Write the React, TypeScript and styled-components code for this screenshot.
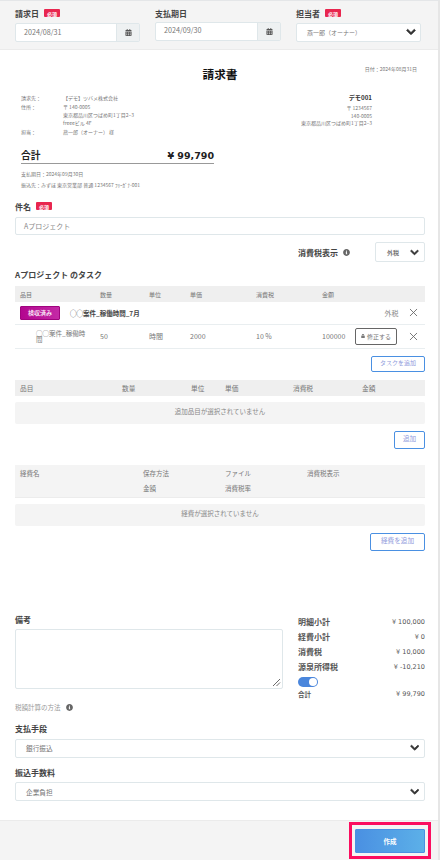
import React from 'react'
import styled, { createGlobalStyle } from 'styled-components'
import { FaCalendarAlt, FaChevronDown, FaInfoCircle, FaLock } from 'react-icons/fa'
import { LuX } from 'react-icons/lu'

const GlobalStyle = createGlobalStyle`
  * { box-sizing: border-box; }
  html, body { margin: 0; background: #fff; }
  body {
    font-family: "Noto Sans CJK JP", "Noto Sans", sans-serif;
    color: #333;
    overflow: hidden;
  }
`

const Page = styled.div`
  width: 440px;
  height: 860px;
  border-right: 2px solid #e6e6e6;
  border-top: 1px solid #e4e6e8;
  display: flex;
  flex-direction: column;
`
const TopBar = styled.div`
  height: 49px;
  background: #f4f4f4;
  border-bottom: 1px solid #ebebeb;
  padding: 5px 17px 0 15px;
  display: grid;
  grid-template-columns: 125px 126px 125px;
  justify-content: space-between;
  flex: none;
`
const FieldLabel = styled.div`
  display: flex;
  align-items: center;
  gap: 5px;
  height: 14px;
  font-size: 8px;
  font-weight: 700;
  color: #444;
`
const Required = styled.span`
  background: #e8264f;
  color: #fff;
  font-size: 5px;
  font-weight: 700;
  width: 16px;
  height: 8px;
  border-radius: 1px;
  display: grid;
  place-items: center;
`
const DateGroup = styled.div<{ $compact?: boolean }>`
  display: flex;
  height: ${(p) => (p.$compact ? 18.5 : 19)}px;
  margin-top: ${(p) => (p.$compact ? 2 : 2.5)}px;
  border: 1px solid #dfe7ea;
  border-radius: 2px;
  background: #fff;
`
const DateText = styled.div<{ $compact?: boolean }>`
  flex: 1;
  font-size: 7.2px;
  line-height: ${(p) => (p.$compact ? 15 : 16)}px;
  padding-left: 8px;
  color: #777;
`
const CalendarAddon = styled.div`
  width: 23px;
  background: #eef1f2;
  border-left: 1px solid #dfe7ea;
  display: grid;
  place-items: center;
  color: #555;
  font-size: 7px;
`
const SelectBox = styled.div`
  display: flex;
  align-items: center;
  justify-content: space-between;
  height: 19px;
  border: 1px solid #dfe7ea;
  border-radius: 2px;
  background: #fff;
  padding: 0 4px 0 10px;
  font-size: 6px;
  color: #777;
  svg { color: #333; font-size: 10px; stroke: #333; stroke-width: 40px; }
`
const TopSelect = styled(SelectBox)`
  margin-top: 2.5px;
`
const Sheet = styled.div`
  flex: none;
  height: 149px;
  padding: 0 21px;
  position: relative;
`
const Title = styled.div`
  text-align: center;
  font-size: 11.7px;
  font-weight: 700;
  color: #111;
  line-height: 18px;
  padding: 15px 0 0 2px;
`
const IssueDate = styled.div`
  position: absolute;
  top: 15px;
  right: 21px;
  font-size: 5px;
  line-height: 7px;
  color: #777;
`
const AddressRow = styled.div`
  display: flex;
  justify-content: space-between;
  margin-top: 11px;
`
const AddressGrid = styled.div`
  display: grid;
  grid-template-columns: 42px auto;
  font-size: 5px;
  line-height: 8px;
  color: #777;
  & > div.gap { margin-top: 1px; }
`
const SenderBlock = styled.div`
  text-align: right;
  font-size: 5px;
  line-height: 7.6px;
  color: #777;
  padding-right: 45px;
  strong { display: block; font-size: 6.2px; color: #333; line-height: 8px; margin-bottom: 2px; }
`
const TotalRow = styled.div`
  display: flex;
  justify-content: space-between;
  align-items: center;
  width: 193px;
  height: 17px;
  margin-top: 11px;
  border-bottom: 1px solid #999;
  font-size: 9.7px;
  font-weight: 700;
  color: #222;
`
const TotalAmount = styled.span`
  font-family: "DejaVu Sans", sans-serif;
  font-size: 9.5px;
`
const SmallNote = styled.div<{ $gap: number }>`
  font-size: 5px;
  color: #777;
  line-height: 7px;
  margin-top: ${(p) => p.$gap}px;
`
const Body = styled.div`
  flex: 1;
  padding: 0 13px 0 15px;
  display: flex;
  flex-direction: column;
`
const SubjectInput = styled.div`
  height: 18.5px;
  margin-top: 3.5px;
  border: 1px solid #dfe7ea;
  border-radius: 2px;
  font-size: 7px;
  line-height: 16px;
  padding-left: 8px;
  color: #888;
`
const TaxRow = styled.div`
  display: flex;
  justify-content: flex-end;
  align-items: center;
  margin-top: 7px;
  height: 20px;
  font-size: 8px;
  font-weight: 700;
  color: #444;
`
const InfoIcon = styled(FaInfoCircle)`
  font-size: 7px;
  color: #666;
  margin-left: 5px;
  flex: none;
`
const TaxSelect = styled(SelectBox)`
  width: 50px;
  height: 20px;
  margin-left: 25px;
  padding: 0 5px 0 11px;
  font-weight: 700;
  font-size: 6px;
  svg { font-size: 9px; }
`
const SectionTitle = styled.div`
  font-size: 8px;
  font-weight: 700;
  color: #444;
  margin-top: 6px;
  line-height: 14px;
`
const HeadRow = styled.div<{ $cols: string; $size: number; $top: number }>`
  display: grid;
  grid-template-columns: ${(p) => p.$cols};
  align-items: center;
  height: 16px;
  margin-top: ${(p) => p.$top}px;
  padding-left: 5px;
  background: #efefef;
  font-size: ${(p) => p.$size}px;
  color: #777;
`
const TaskRow = styled.div`
  display: grid;
  grid-template-columns: 80px 49px 41px 66px 66px 33px 1fr;
  align-items: center;
  height: 24px;
  padding-left: 5px;
  border-bottom: 1px solid #e9eef0;
  font-size: 7px;
  color: #777;
`
const GroupRow = styled.div`
  display: flex;
  align-items: center;
  height: 22.5px;
  padding-left: 5px;
  border-bottom: 1px solid #e9eef0;
  font-size: 6.5px;
  font-weight: 700;
  color: #444;
`
const Badge = styled.span`
  width: 40px;
  height: 14px;
  background: linear-gradient(90deg, #b3068f, #c42aa6);
  border: 1px solid #a0047f;
  border-radius: 1px;
  color: #fff;
  display: grid;
  place-items: center;
  font-size: 6px;
  font-weight: 500;
  margin-right: 10px;
`
const TaxNote = styled.span`
  margin-left: auto;
  font-size: 7px;
  font-weight: 400;
  color: #888;
`
const RemoveIcon = styled(LuX)`
  font-size: 13px;
  stroke-width: 1.6;
  color: #666;
  flex: none;
  margin: 0 5.5px 0 8px;
`
const TaskName = styled.div`
  padding: 0 13px 0 16px;
  font-size: 6.5px;
  line-height: 6.5px;
`
const EditCell = styled.div`
  display: flex;
  align-items: center;
  justify-content: space-between;
`
const EditButton = styled.div`
  width: 42px;
  height: 17px;
  border: 1px solid #666;
  border-radius: 2px;
  display: flex;
  align-items: center;
  justify-content: center;
  gap: 2px;
  font-size: 6px;
  color: #777;
  svg { font-size: 4px; }
`
const ButtonRow = styled.div`
  display: flex;
  justify-content: flex-end;
  margin-top: 7px;
`
const OutlineButton = styled.div<{ $w: number; $h: number; $size: number }>`
  width: ${(p) => p.$w}px;
  height: ${(p) => p.$h}px;
  border: 1px solid #4a90e2;
  border-radius: 2px;
  color: #8f9bdc;
  font-size: ${(p) => p.$size}px;
  text-align: center;
  line-height: 12px;
`
const EmptyNote = styled.div`
  height: 22px;
  margin-top: 6px;
  background: #f4f4f4;
  border-radius: 2px;
  font-size: 6.5px;
  color: #888;
  text-align: center;
  line-height: 18px;
`
const ExpenseHead = styled.div`
  display: grid;
  grid-template-columns: 123px 82px 82px 1fr;
  grid-auto-rows: 15.5px;
  align-items: center;
  height: 33px;
  margin-top: 16px;
  padding-left: 5px;
  background: #f4f4f4;
  border-bottom: 1px solid #ececec;
  font-size: 6.5px;
  color: #777;
`
const Bottom = styled.div`
  display: grid;
  grid-template-columns: 268px 1fr;
  column-gap: 15px;
  margin-top: 63px;
`
const NoteColumn = styled.div`
  display: flex;
  flex-direction: column;
`
const StrongLabel = styled.div`
  font-size: 8px;
  font-weight: 700;
  color: #444;
  line-height: 12px;
`
const NoteArea = styled.div`
  height: 60px;
  margin-top: 3px;
  border: 1px solid #dfe7ea;
  border-radius: 2px;
  position: relative;
`
const ResizeGrip = styled.svg`
  position: absolute;
  right: 1px;
  bottom: 1px;
  width: 9px;
  height: 9px;
`
const TaxMethod = styled.div`
  display: flex;
  align-items: center;
  height: 10px;
  margin-top: 13px;
  font-size: 6.5px;
  color: #999;
`
const SummaryRow = styled.div<{ $h?: number; $small?: boolean }>`
  display: flex;
  justify-content: space-between;
  align-items: center;
  height: ${(p) => p.$h ?? 15}px;
  font-size: ${(p) => (p.$small ? 6.5 : 8)}px;
  font-weight: 700;
  color: #555;
`
const SummaryValue = styled.span`
  font-family: "DejaVu Sans", sans-serif;
  font-size: 6.5px;
  font-weight: 400;
  color: #555;
`
const Toggle = styled.div`
  width: 20px;
  height: 10px;
  margin-top: 3px;
  border-radius: 5px;
  background: #4a86dc;
  position: relative;
  &::after {
    content: '';
    position: absolute;
    right: 1px;
    top: 1px;
    width: 8px;
    height: 8px;
    border-radius: 50%;
    background: #fff;
  }
`
const FormLabel = styled(StrongLabel)<{ $top: number }>`
  margin-top: ${(p) => p.$top}px;
`
const WideSelect = styled(SelectBox)`
  margin-top: 3.5px;
  height: 19px;
  padding: 0 5px 0 10px;
  font-size: 6.7px;
  svg { font-size: 9.5px; }
`
const Footer = styled.div`
  flex: none;
  height: 40px;
  background: #f4f4f4;
  border-top: 1px solid #ebebeb;
  display: flex;
  justify-content: flex-end;
  align-items: flex-start;
  padding: 1px 7px 0 0;
`
const Highlight = styled.div`
  border: 3px solid #fb0d5f;
  width: 82px;
  height: 37px;
  display: grid;
  place-items: center;
`
const PrimaryButton = styled.div`
  width: 70px;
  height: 24px;
  border: 1px solid #4a90e2;
  border-radius: 1px;
  background: linear-gradient(90deg, #4a90e2, #5cb0e8);
  color: #fff;
  font-size: 6.5px;
  font-weight: 700;
  display: grid;
  place-items: center;
`

const App = () => {
  return (
    <>
      <GlobalStyle />
      <Page>
        <TopBar>
          <div>
            <FieldLabel>請求日<Required>必須</Required></FieldLabel>
            <DateGroup>
              <DateText>2024/08/31</DateText>
              <CalendarAddon><FaCalendarAlt /></CalendarAddon>
            </DateGroup>
          </div>
          <div>
            <FieldLabel>支払期日</FieldLabel>
            <DateGroup $compact>
              <DateText $compact>2024/09/30</DateText>
              <CalendarAddon><FaCalendarAlt /></CalendarAddon>
            </DateGroup>
          </div>
          <div>
            <FieldLabel>担当者<Required>必須</Required></FieldLabel>
            <TopSelect>
              <span>燕一郎（オーナー）</span>
              <FaChevronDown />
            </TopSelect>
          </div>
        </TopBar>

        <Sheet>
          <Title>請求書</Title>
          <IssueDate>日付：2024年08月31日</IssueDate>
          <AddressRow>
            <AddressGrid>
              <div>請求先：</div><div>【デモ】ツバメ株式会社</div>
              <div className="gap">住所：</div>
              <div className="gap">〒 140-0005<br />東京都品川区つばめ町1丁目2−3<br />freeeビル 4F</div>
              <div className="gap">担当：</div><div className="gap">燕一郎（オーナー） 様</div>
            </AddressGrid>
            <SenderBlock>
              <strong>デモ001</strong>
              〒 1234567<br />140-0005<br />東京都品川区つばめ町1丁目2−3
            </SenderBlock>
          </AddressRow>
          <TotalRow><span>合計</span><TotalAmount>¥ 99,790</TotalAmount></TotalRow>
          <SmallNote $gap={6}>支払期日：2024年09月30日</SmallNote>
          <SmallNote $gap={4}>振込先：みずほ 東京営業部 普通 1234567 ﾌﾘｰｶﾞﾅ-001</SmallNote>
        </Sheet>

        <Body>
          <FieldLabel>件名<Required>必須</Required></FieldLabel>
          <SubjectInput>Aプロジェクト</SubjectInput>
          <TaxRow>
            消費税表示<InfoIcon />
            <TaxSelect><span>外税</span><FaChevronDown /></TaxSelect>
          </TaxRow>
          <SectionTitle>Aプロジェクト のタスク</SectionTitle>
          <HeadRow $cols="80px 49px 41px 66px 66px 1fr" $size={6} $top={4}>
            <span>品目</span><span>数量</span><span>単位</span><span>単価</span><span>消費税</span><span>金額</span>
          </HeadRow>
          <GroupRow>
            <Badge>検収済み</Badge>
            ◯◯案件_稼働時間_7月
            <TaxNote>外税</TaxNote>
            <RemoveIcon />
          </GroupRow>
          <TaskRow>
            <TaskName>◯◯案件_稼働時間</TaskName>
            <span>50</span><span>時間</span><span>2000</span><span>10 %</span><span>100000</span>
            <EditCell>
              <EditButton><FaLock />修正する</EditButton>
              <RemoveIcon />
            </EditCell>
          </TaskRow>
          <ButtonRow><OutlineButton $w={54} $h={16.5} $size={6}>タスクを追加</OutlineButton></ButtonRow>
          <HeadRow $cols="102px 69px 34px 68px 69px 1fr" $size={6.7} $top={8}>
            <span>品目</span><span>数量</span><span>単位</span><span>単価</span><span>消費税</span><span>金額</span>
          </HeadRow>
          <EmptyNote>追加品目が選択されていません</EmptyNote>
          <ButtonRow><OutlineButton $w={31} $h={18} $size={6.6}>追加</OutlineButton></ButtonRow>
          <ExpenseHead>
            <span>経費名</span><span>保存方法</span><span>ファイル</span><span>消費税表示</span>
            <span /><span>金額</span><span>消費税率</span><span />
          </ExpenseHead>
          <EmptyNote>経費が選択されていません</EmptyNote>
          <ButtonRow><OutlineButton $w={55} $h={18} $size={6.6}>経費を追加</OutlineButton></ButtonRow>

          <Bottom>
            <NoteColumn>
              <StrongLabel>備考</StrongLabel>
              <NoteArea>
                <ResizeGrip viewBox="0 0 9 9">
                  <path d="M1 8 L8 1 M4.5 8 L8 4.5" stroke="#444" strokeWidth="0.8" fill="none" />
                </ResizeGrip>
              </NoteArea>
              <TaxMethod>税額計算の方法<InfoIcon /></TaxMethod>
            </NoteColumn>
            <div>
              <SummaryRow><span>明細小計</span><SummaryValue>¥ 100,000</SummaryValue></SummaryRow>
              <SummaryRow><span>経費小計</span><SummaryValue>¥ 0</SummaryValue></SummaryRow>
              <SummaryRow><span>消費税</span><SummaryValue>¥ 10,000</SummaryValue></SummaryRow>
              <SummaryRow><span>源泉所得税</span><SummaryValue>¥ -10,210</SummaryValue></SummaryRow>
              <Toggle />
              <SummaryRow $h={13} $small><span>合計</span><SummaryValue>¥ 99,790</SummaryValue></SummaryRow>
            </div>
          </Bottom>
          <FormLabel $top={11}>支払手段</FormLabel>
          <WideSelect><span>銀行振込</span><FaChevronDown /></WideSelect>
          <FormLabel $top={9}>振込手数料</FormLabel>
          <WideSelect><span>企業負担</span><FaChevronDown /></WideSelect>
        </Body>

        <Footer>
          <Highlight><PrimaryButton>作成</PrimaryButton></Highlight>
        </Footer>
      </Page>
    </>
  )
}

export default App
